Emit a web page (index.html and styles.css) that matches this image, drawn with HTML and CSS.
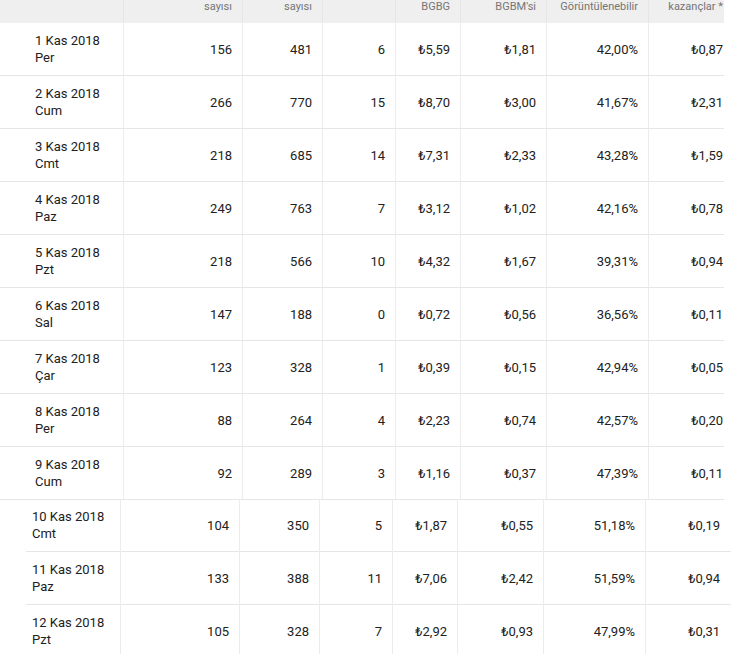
FILE: index.html
```html
<!DOCTYPE html>
<html lang="tr">
<head>
<meta charset="utf-8">
<title>Rapor</title>
<link rel="stylesheet" href="styles.css">
</head>
<body>
<div class="page">
  <div class="block block-top">
    <div class="row head">
      <div class="cell"></div>
      <div class="cell">sayısı</div>
      <div class="cell">sayısı</div>
      <div class="cell"></div>
      <div class="cell">BGBG</div>
      <div class="cell">BGBM'si</div>
      <div class="cell">Görüntülenebilir</div>
      <div class="cell last">kazançlar *</div>
    </div>
    <div class="row"><div class="cell date">1 Kas 2018<br>Per</div><div class="cell">156</div><div class="cell">481</div><div class="cell">6</div><div class="cell">₺5,59</div><div class="cell">₺1,81</div><div class="cell">42,00%</div><div class="cell last">₺0,87</div></div>
    <div class="row"><div class="cell date">2 Kas 2018<br>Cum</div><div class="cell">266</div><div class="cell">770</div><div class="cell">15</div><div class="cell">₺8,70</div><div class="cell">₺3,00</div><div class="cell">41,67%</div><div class="cell last">₺2,31</div></div>
    <div class="row"><div class="cell date">3 Kas 2018<br>Cmt</div><div class="cell">218</div><div class="cell">685</div><div class="cell">14</div><div class="cell">₺7,31</div><div class="cell">₺2,33</div><div class="cell">43,28%</div><div class="cell last">₺1,59</div></div>
    <div class="row"><div class="cell date">4 Kas 2018<br>Paz</div><div class="cell">249</div><div class="cell">763</div><div class="cell">7</div><div class="cell">₺3,12</div><div class="cell">₺1,02</div><div class="cell">42,16%</div><div class="cell last">₺0,78</div></div>
    <div class="row"><div class="cell date">5 Kas 2018<br>Pzt</div><div class="cell">218</div><div class="cell">566</div><div class="cell">10</div><div class="cell">₺4,32</div><div class="cell">₺1,67</div><div class="cell">39,31%</div><div class="cell last">₺0,94</div></div>
    <div class="row"><div class="cell date">6 Kas 2018<br>Sal</div><div class="cell">147</div><div class="cell">188</div><div class="cell">0</div><div class="cell">₺0,72</div><div class="cell">₺0,56</div><div class="cell">36,56%</div><div class="cell last">₺0,11</div></div>
    <div class="row"><div class="cell date">7 Kas 2018<br>Çar</div><div class="cell">123</div><div class="cell">328</div><div class="cell">1</div><div class="cell">₺0,39</div><div class="cell">₺0,15</div><div class="cell">42,94%</div><div class="cell last">₺0,05</div></div>
    <div class="row"><div class="cell date">8 Kas 2018<br>Per</div><div class="cell">88</div><div class="cell">264</div><div class="cell">4</div><div class="cell">₺2,23</div><div class="cell">₺0,74</div><div class="cell">42,57%</div><div class="cell last">₺0,20</div></div>
    <div class="row"><div class="cell date">9 Kas 2018<br>Cum</div><div class="cell">92</div><div class="cell">289</div><div class="cell">3</div><div class="cell">₺1,16</div><div class="cell">₺0,37</div><div class="cell">47,39%</div><div class="cell last">₺0,11</div></div>
  </div>
  <div class="block block-bottom">
    <div class="row"><div class="cell date">10 Kas 2018<br>Cmt</div><div class="cell">104</div><div class="cell">350</div><div class="cell">5</div><div class="cell">₺1,87</div><div class="cell">₺0,55</div><div class="cell">51,18%</div><div class="cell last">₺0,19</div></div>
    <div class="row"><div class="cell date">11 Kas 2018<br>Paz</div><div class="cell">133</div><div class="cell">388</div><div class="cell">11</div><div class="cell">₺7,06</div><div class="cell">₺2,42</div><div class="cell">51,59%</div><div class="cell last">₺0,94</div></div>
    <div class="row"><div class="cell date">12 Kas 2018<br>Pzt</div><div class="cell">105</div><div class="cell">328</div><div class="cell">7</div><div class="cell">₺2,92</div><div class="cell">₺0,93</div><div class="cell">47,99%</div><div class="cell last">₺0,31</div></div>
  </div>
</div>
</body>
</html>
```

FILE: styles.css
```css
html, body {
  margin: 0;
  padding: 0;
  background: #ffffff;
  overflow: hidden;
}

body {
  font-family: Roboto, "Liberation Sans", sans-serif;
  font-size: 13px;
  color: #212121;
}

.page {
  width: 738px;
  height: 654px;
  overflow: hidden;
}

.block {
  display: flex;
  flex-direction: column;
}

.block-top {
  width: 724px;
  overflow: hidden;
}

.block-bottom {
  width: 734px;
  margin-left: -3px;
  margin-top: -1px;
}

.row {
  display: grid;
  grid-template-columns: 124px 119px 80px 73px 65px 86px 102px 85px;
  width: 734px;
  height: 53px;
  box-sizing: border-box;
  border-bottom: 1px solid #e6e6e6;
  flex-shrink: 0;
}

.block-bottom .row {
  border-bottom: none;
  background: linear-gradient(#e6e6e6, #e6e6e6) no-repeat 29px 100% / calc(100% - 29px) 1px;
}

.cell {
  box-sizing: border-box;
  border-right: 1px solid #ececec;
  padding-right: 10px;
  text-align: right;
  display: flex;
  align-items: center;
  justify-content: flex-end;
  line-height: 17px;
  white-space: nowrap;
}

.cell.last {
  border-right: none;
  padding-right: 11px;
}

.cell.date {
  display: block;
  text-align: left;
  padding: 9px 0 0 35px;
}

.row.head {
  height: 23px;
  background: #efefef;
  border-bottom: none;
  color: #757575;
  font-size: 11px;
}

.row.head .cell {
  align-items: flex-start;
  line-height: 13px;
  padding-top: 0;
  border-right-color: #e6e6e6;
}
```
